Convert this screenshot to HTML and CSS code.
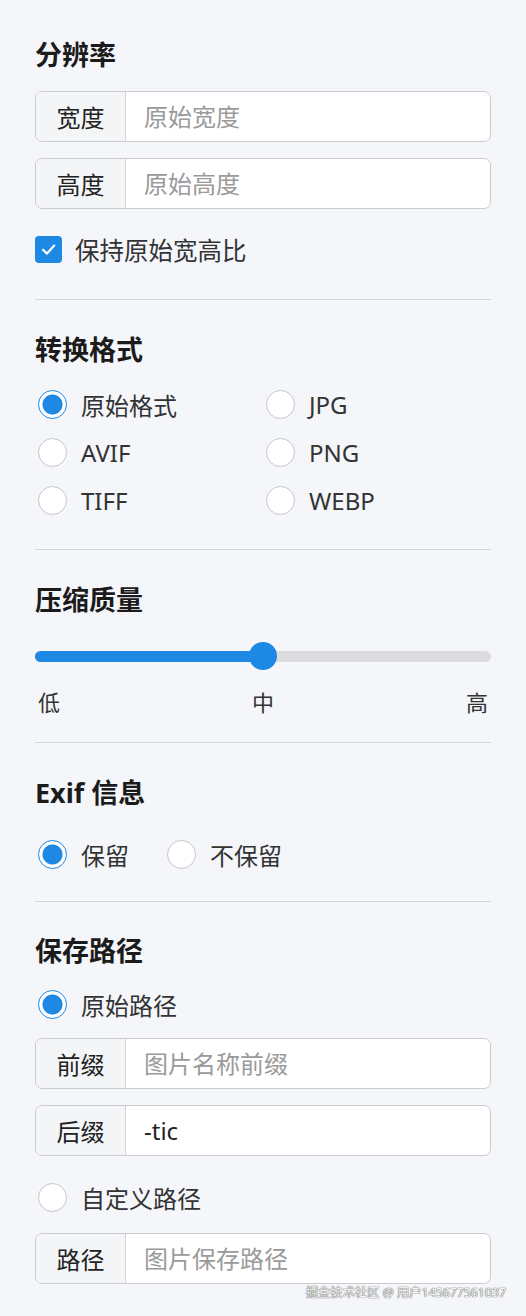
FILE: index.html
```html
<!DOCTYPE html>
<html lang="zh-CN">
  <head>
    <meta charset="UTF-8" />
    <meta name="viewport" content="width=device-width, initial-scale=1.0" />
    <title>图片设置</title>
    <link rel="stylesheet" href="styles.css">
  </head>
  <body>
    <div class="panel">
      <section class="section">
        <h2 class="title">分辨率</h2>
        <div class="input-group first">
          <span class="addon">宽度</span>
          <input type="text" placeholder="原始宽度" />
        </div>
        <div class="input-group">
          <span class="addon">高度</span>
          <input type="text" placeholder="原始高度" />
        </div>
        <label class="check-row">
          <span class="checkbox">
            <svg width="17" height="17" viewBox="0 0 17 17">
              <path d="M3 8.8 L7 12.6 L14.2 4.6" fill="none" stroke="#fff" stroke-width="2.2" stroke-linecap="round" stroke-linejoin="round" />
            </svg>
          </span>
          保持原始宽高比
        </label>
      </section>

      <section class="section">
        <h2 class="title">转换格式</h2>
        <div class="radio-grid">
          <div class="radio-row"><span class="radio checked"></span>原始格式</div>
          <div class="radio-row"><span class="radio"></span>JPG</div>
          <div class="radio-row"><span class="radio"></span>AVIF</div>
          <div class="radio-row"><span class="radio"></span>PNG</div>
          <div class="radio-row"><span class="radio"></span>TIFF</div>
          <div class="radio-row"><span class="radio"></span>WEBP</div>
        </div>
      </section>

      <section class="section">
        <h2 class="title">压缩质量</h2>
        <div class="slider">
          <div class="track">
            <div class="fill" style="width: 50%"></div>
          </div>
          <div class="thumb" style="left: 50%"></div>
        </div>
        <div class="slider-labels">
          <span>低</span>
          <span>中</span>
          <span>高</span>
        </div>
      </section>

      <section class="section exif">
        <h2 class="title">Exif 信息</h2>
        <div class="radio-inline">
          <div class="radio-row"><span class="radio checked"></span>保留</div>
          <div class="radio-row"><span class="radio"></span>不保留</div>
        </div>
      </section>

      <section class="section last">
        <h2 class="title">保存路径</h2>
        <div class="radio-row path-radio"><span class="radio checked"></span>原始路径</div>
        <div class="input-group tight">
          <span class="addon">前缀</span>
          <input type="text" placeholder="图片名称前缀" />
        </div>
        <div class="input-group">
          <span class="addon">后缀</span>
          <input type="text" value="-tic" />
        </div>
        <div class="radio-row path-radio custom"><span class="radio"></span>自定义路径</div>
        <div class="input-group custom-path">
          <span class="addon">路径</span>
          <input type="text" placeholder="图片保存路径" />
        </div>
      </section>
    </div>

    <div class="watermark">掘金技术社区 @ 用户145677561037</div>
  </body>
</html>
```

FILE: styles.css
```css
body {
  margin: 0;
  background: #f4f6fa;
  font-family: "Noto Sans", "Noto Sans CJK SC", sans-serif;
  color: #333;
}
.panel {
  padding: 5px 35px 0;
}
.section {
  padding: 33px 0 25px;
  border-bottom: 1px solid #d3d5d9;
}
.section:first-child {
  padding-bottom: 26px;
}
.section.exif {
  padding-bottom: 23px;
}
.section.last {
  padding-top: 32px;
  border-bottom: none;
}
.title {
  margin: 0;
  font-size: 27px;
  line-height: 34px;
  font-weight: bold;
  color: #1b1b1b;
}

/* input with a label in front */
.input-group {
  display: flex;
  height: 51px;
  margin-top: 16px;
  border: 1px solid #c9cbcf;
  border-radius: 7px;
  background: #fff;
  box-sizing: border-box;
  overflow: hidden;
}
.input-group.first {
  margin-top: 19px;
}
.input-group.tight {
  margin-top: 10px;
}
.input-group.custom-path {
  margin-top: 12px;
}
.addon {
  width: 90px;
  flex-shrink: 0;
  display: flex;
  align-items: center;
  justify-content: center;
  background: #f4f5f7;
  border-right: 1px solid #d3d5d9;
  font-size: 24px;
  color: #222;
  box-sizing: border-box;
}
.input-group input {
  flex: 1;
  min-width: 0;
  border: none;
  outline: none;
  background: transparent;
  padding: 0 18px;
  font-family: inherit;
  font-size: 24px;
  color: #222;
}
.input-group input::placeholder {
  color: #9a9a9a;
}

/* checkbox */
.check-row {
  display: flex;
  align-items: center;
  height: 48px;
  margin-top: 16px;
  font-size: 24.5px;
  color: #333;
}
.checkbox {
  width: 27px;
  height: 27px;
  margin-right: 13px;
  border-radius: 4px;
  background: #1e88e5;
  display: flex;
  align-items: center;
  justify-content: center;
}

/* radios */
.radio-grid {
  display: grid;
  grid-template-columns: 1fr 1fr;
  margin-top: 13px;
}
.radio-row {
  display: flex;
  align-items: center;
  height: 48px;
  font-size: 24px;
  color: #333;
}
.radio {
  width: 29px;
  height: 29px;
  margin: 0 14px 0 3px;
  border: 1px solid #c4c6ca;
  border-radius: 50%;
  background: #fff;
  box-sizing: border-box;
}
.radio.checked {
  border: 1px solid #1e88e5;
  background: radial-gradient(circle, #1e88e5 0 9.5px, #fff 10.5px);
}
.radio-inline {
  display: flex;
  gap: 35px;
  margin-top: 20px;
}
.path-radio {
  margin-top: 12px;
}
.path-radio.custom {
  margin-top: 17px;
}

/* slider */
.slider {
  position: relative;
  height: 28px;
  margin-top: 25px;
  display: flex;
  align-items: center;
}
.track {
  width: 100%;
  height: 11px;
  border-radius: 6px;
  background: #dcdcde;
  overflow: hidden;
}
.fill {
  height: 100%;
  background: #1e88e5;
}
.thumb {
  position: absolute;
  top: 0;
  width: 28px;
  height: 28px;
  margin-left: -14px;
  border-radius: 50%;
  background: #1e88e5;
}
.slider-labels {
  display: flex;
  justify-content: space-between;
  margin-top: 17px;
  padding: 0 3px;
  font-size: 22px;
  line-height: 30px;
  color: #333;
}

.watermark {
  position: absolute;
  right: 20px;
  top: 1284px;
  font-size: 12.3px;
  line-height: 18px;
  color: #f2f2f2;
  text-shadow: 0 0 1px #555, 0 0 1px #555;
}
```
